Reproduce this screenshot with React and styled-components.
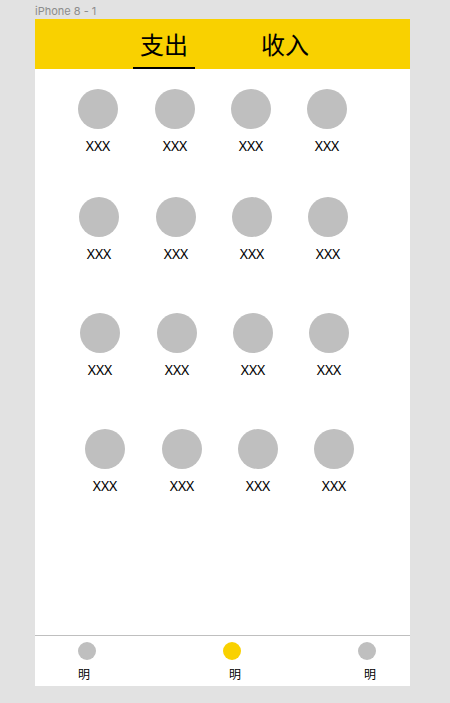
import React, { useState } from "react";
import styled, { createGlobalStyle } from "styled-components";

const YELLOW = "#f9d100";
const GREY = "#bfbfbf";

const GlobalStyle = createGlobalStyle`
  * { box-sizing: border-box; }
  body {
    margin: 0;
    background: #e2e2e2;
    color: #000;
    font-family: "Noto Sans", "Noto Sans CJK SC", sans-serif;
  }
  button {
    margin: 0;
    padding: 0;
    border: 0;
    background: none;
    color: inherit;
    font: inherit;
    cursor: pointer;
  }
`;

const Canvas = styled.div`
  display: flex;
  flex-direction: column;
  min-height: 100vh;
  padding: 4px 40px 17px 35px;
`;

const FrameTitle = styled.div`
  font-family: Inter, sans-serif;
  font-size: 11px;
  line-height: 15px;
  color: #8c8c8c;
`;

const Phone = styled.div`
  flex: 1;
  display: flex;
  flex-direction: column;
  background: #fff;
`;

const Tabs = styled.header`
  display: flex;
  justify-content: center;
  gap: 59px;
  height: 50px;
  padding-left: 4px;
  background: ${YELLOW};
`;

const Tab = styled.button`
  width: 62px;
  border-bottom: 2px solid ${(p) => (p.$active ? "#000" : "transparent")};
  && {
    padding-top: 2px;
    font-family: "Noto Sans CJK SC", sans-serif;
    font-size: 24px;
    line-height: 46px;
  }
`;

const Categories = styled.main`
  flex: 1;
  display: flex;
  flex-direction: column;
  gap: 49px;
  padding: 20px 63px 40px 43px;
`;

const CategoryGroup = styled.div`
  display: flex;
  flex-direction: column;
  gap: 41px;
`;

const CategoryRow = styled.div`
  display: grid;
  grid-template-columns: 77fr 76fr 76fr 40px;
  margin: 0 -${(p) => p.$indent}px 0 ${(p) => p.$indent}px;
`;

const Category = styled.button`
  display: flex;
  flex-direction: column;
  align-items: center;
  gap: 7px;
  width: 40px;
  && {
    font-size: 14px;
    line-height: 20px;
  }
`;

const Dot = styled.span`
  width: ${(p) => p.$size}px;
  height: ${(p) => p.$size}px;
  border-radius: 50%;
  background: ${(p) => (p.$active ? YELLOW : GREY)};
`;

const BottomNav = styled.nav`
  display: grid;
  grid-template-columns: 145fr 135fr 18px;
  height: 51px;
  padding: 6px 34px 0 43px;
  border-top: 1px solid ${GREY};
`;

const NavItem = styled.button`
  display: flex;
  flex-direction: column;
  align-items: ${(p) => p.$align};
  gap: 5px;
  width: 18px;
  && {
    font-family: "Noto Sans CJK SC", sans-serif;
    font-size: 12px;
    line-height: 18px;
  }
`;

const groups = [[0, 1], [2], [7]];
const navItems = ["flex-start", "flex-end", "flex-end"];

export default function App() {
  const [tab, setTab] = useState("支出");
  const [page, setPage] = useState(1);

  return (
    <>
      <GlobalStyle />
      <Canvas>
        <FrameTitle>iPhone 8 - 1</FrameTitle>
        <Phone>
          <Tabs role="tablist">
            {["支出", "收入"].map((name) => (
              <Tab
                key={name}
                role="tab"
                aria-selected={tab === name}
                $active={tab === name}
                onClick={() => setTab(name)}
              >
                {name}
              </Tab>
            ))}
          </Tabs>
          <Categories>
            {groups.map((rows) => (
              <CategoryGroup key={rows[0]}>
                {rows.map((indent) => (
                  <CategoryRow key={indent} $indent={indent}>
                    {[0, 1, 2, 3].map((i) => (
                      <Category key={i}>
                        <Dot $size={40} />
                        <span>XXX</span>
                      </Category>
                    ))}
                  </CategoryRow>
                ))}
              </CategoryGroup>
            ))}
          </Categories>
          <BottomNav>
            {navItems.map((align, i) => (
              <NavItem key={i} $align={align} onClick={() => setPage(i)}>
                <Dot $size={18} $active={page === i} />
                <span>明</span>
              </NavItem>
            ))}
          </BottomNav>
        </Phone>
      </Canvas>
    </>
  );
}
